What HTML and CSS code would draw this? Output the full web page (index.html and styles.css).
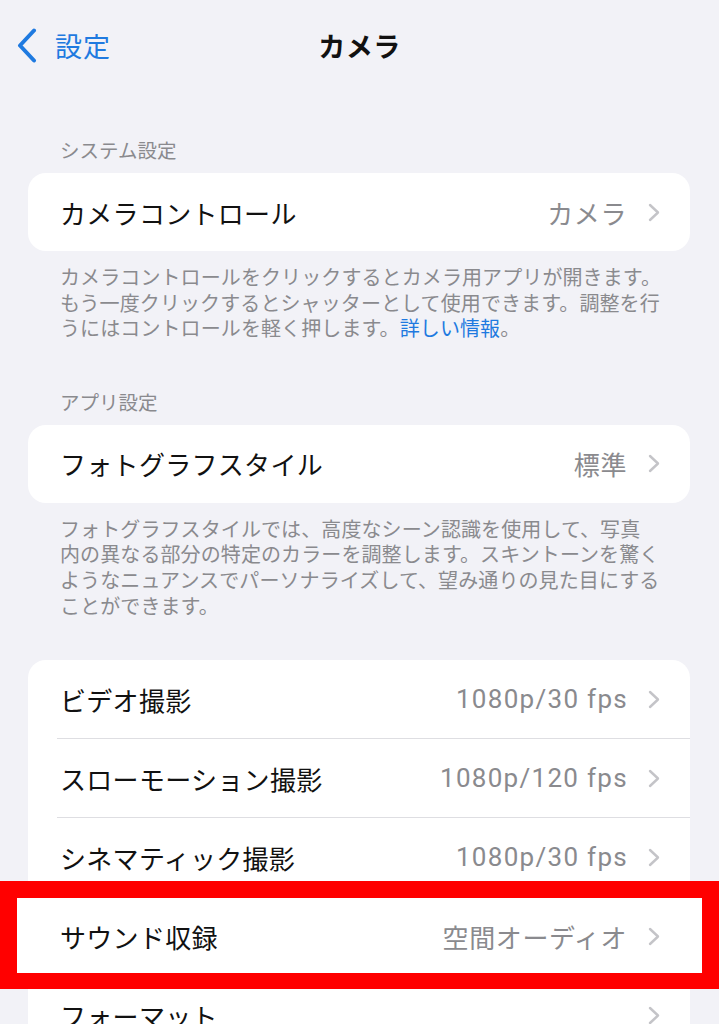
FILE: index.html
```html
<!DOCTYPE html>
<html lang="ja">

<head>
    <meta charset="UTF-8">
    <title>カメラ</title>
    <link rel="stylesheet" href="styles.css">
</head>

<body>

    <div class="nav">
        <a class="back" href="#">
            <svg width="20" height="35" viewBox="0 0 20 35">
                <path d="M17 2.5L3 17.5l14 15" fill="none" stroke="#1f7ae0" stroke-width="4" stroke-linecap="round" stroke-linejoin="round" />
            </svg>
            <span>設定</span>
        </a>
        <div class="title">カメラ</div>
    </div>

    <div class="group-head first">システム設定</div>
    <div class="card">
        <div class="row">
            <div class="row-body">
                <span class="label">カメラコントロール</span>
                <span class="value">カメラ</span>
                <svg class="chev" width="12" height="19" viewBox="0 0 12 19">
                    <path d="M2 2l8 7.5-8 7.5" fill="none" stroke="#c4c4c8" stroke-width="2.4" stroke-linecap="round" stroke-linejoin="round" />
                </svg>
            </div>
        </div>
    </div>
    <div class="group-foot">
        カメラコントロールをクリックするとカメラ用アプリが開きます。<br>
        もう一度クリックするとシャッターとして使用できます。調整を行<br>
        うにはコントロールを軽く押します。<a href="#">詳しい情報</a>。
    </div>

    <div class="group-head">アプリ設定</div>
    <div class="card">
        <div class="row">
            <div class="row-body">
                <span class="label">フォトグラフスタイル</span>
                <span class="value">標準</span>
                <svg class="chev" width="12" height="19" viewBox="0 0 12 19">
                    <path d="M2 2l8 7.5-8 7.5" fill="none" stroke="#c4c4c8" stroke-width="2.4" stroke-linecap="round" stroke-linejoin="round" />
                </svg>
            </div>
        </div>
    </div>
    <div class="group-foot">
        フォトグラフスタイルでは、高度なシーン認識を使用して、写真<br>
        内の異なる部分の特定のカラーを調整します。スキントーンを驚く<br>
        ようなニュアンスでパーソナライズして、望み通りの見た目にする<br>
        ことができます。
    </div>

    <div class="card last">
        <div class="row">
            <div class="row-body">
                <span class="label">ビデオ撮影</span>
                <span class="value num">1080p/30 fps</span>
                <svg class="chev" width="12" height="19" viewBox="0 0 12 19">
                    <path d="M2 2l8 7.5-8 7.5" fill="none" stroke="#c4c4c8" stroke-width="2.4" stroke-linecap="round" stroke-linejoin="round" />
                </svg>
            </div>
        </div>
        <div class="row">
            <div class="row-body">
                <span class="label">スローモーション撮影</span>
                <span class="value num">1080p/120 fps</span>
                <svg class="chev" width="12" height="19" viewBox="0 0 12 19">
                    <path d="M2 2l8 7.5-8 7.5" fill="none" stroke="#c4c4c8" stroke-width="2.4" stroke-linecap="round" stroke-linejoin="round" />
                </svg>
            </div>
        </div>
        <div class="row">
            <div class="row-body">
                <span class="label">シネマティック撮影</span>
                <span class="value num">1080p/30 fps</span>
                <svg class="chev" width="12" height="19" viewBox="0 0 12 19">
                    <path d="M2 2l8 7.5-8 7.5" fill="none" stroke="#c4c4c8" stroke-width="2.4" stroke-linecap="round" stroke-linejoin="round" />
                </svg>
            </div>
        </div>
        <div class="row marked">
            <div class="mark"></div>
            <div class="row-body">
                <span class="label">サウンド収録</span>
                <span class="value">空間オーディオ</span>
                <svg class="chev" width="12" height="19" viewBox="0 0 12 19">
                    <path d="M2 2l8 7.5-8 7.5" fill="none" stroke="#c4c4c8" stroke-width="2.4" stroke-linecap="round" stroke-linejoin="round" />
                </svg>
            </div>
        </div>
        <div class="row">
            <div class="row-body">
                <span class="label">フォーマット</span>
                <span class="value"></span>
                <svg class="chev" width="12" height="19" viewBox="0 0 12 19">
                    <path d="M2 2l8 7.5-8 7.5" fill="none" stroke="#c4c4c8" stroke-width="2.4" stroke-linecap="round" stroke-linejoin="round" />
                </svg>
            </div>
        </div>
    </div>

</body>

</html>
```

FILE: styles.css
```css
body {
    margin: 0;
    background: #f2f2f7;
    font-family: "Noto Sans CJK JP", "Noto Sans", sans-serif;
    color: #111;
}

a {
    text-decoration: none;
}

/* ナビゲーション */
.nav {
    height: 90px;
    display: flex;
    align-items: center;
    justify-content: center;
    position: relative;
}

.back {
    position: absolute;
    left: 17px;
    top: 28px;
    display: flex;
    align-items: center;
    gap: 18px;
    color: #1f7ae0;
    font-size: 27px;
}

.back span {
    line-height: 34px;
    letter-spacing: 1px;
}

.title {
    font-size: 27px;
    font-weight: bold;
    letter-spacing: 0.5px;
}

/* グループ */
.group-head {
    margin-top: 48px;
    padding-left: 60px;
    font-size: 19.5px;
    line-height: 26px;
    color: #8a8a8e;
}

.group-head.first {
    margin-top: 47px;
}

.card {
    margin: 10px 29px 0 28px;
    background: #fff;
    border-radius: 18px;
}

.card.last {
    margin-top: 42px;
}

.row {
    padding-left: 29px;
    position: relative;
}

.row.marked {
    z-index: 1;
}

.row-body {
    height: 78px;
    display: flex;
    align-items: center;
    padding: 0 30px 0 3px;
    position: relative;
}

.row + .row .row-body {
    border-top: 1px solid #dedee2;
}

.row.marked .row-body {
    border-top-color: transparent;
}

.label {
    flex: 1;
    font-size: 26px;
    letter-spacing: 0.3px;
    white-space: nowrap;
}

.value {
    font-size: 26px;
    color: #8a8a8e;
    letter-spacing: 0.6px;
    margin-right: 21px;
    white-space: nowrap;
}

.value.num {
    font-family: Roboto, "Noto Sans CJK JP", sans-serif;
    letter-spacing: 1.3px;
    margin-right: 20px;
}

.chev {
    display: block;
}

.group-foot {
    margin-top: 13px;
    padding-left: 60px;
    font-size: 20px;
    letter-spacing: 0.1px;
    line-height: 25.6px;
    color: #8a8a8e;
    white-space: nowrap;
}

.group-foot a {
    color: #1f7ae0;
}

/* 赤枠 */
.mark {
    position: absolute;
    top: -15px;
    left: -28px;
    right: -29px;
    height: 108px;
    box-sizing: border-box;
    border: 17px solid #ff0000;
    border-bottom-width: 16px;
    background: #fff;
}
```
